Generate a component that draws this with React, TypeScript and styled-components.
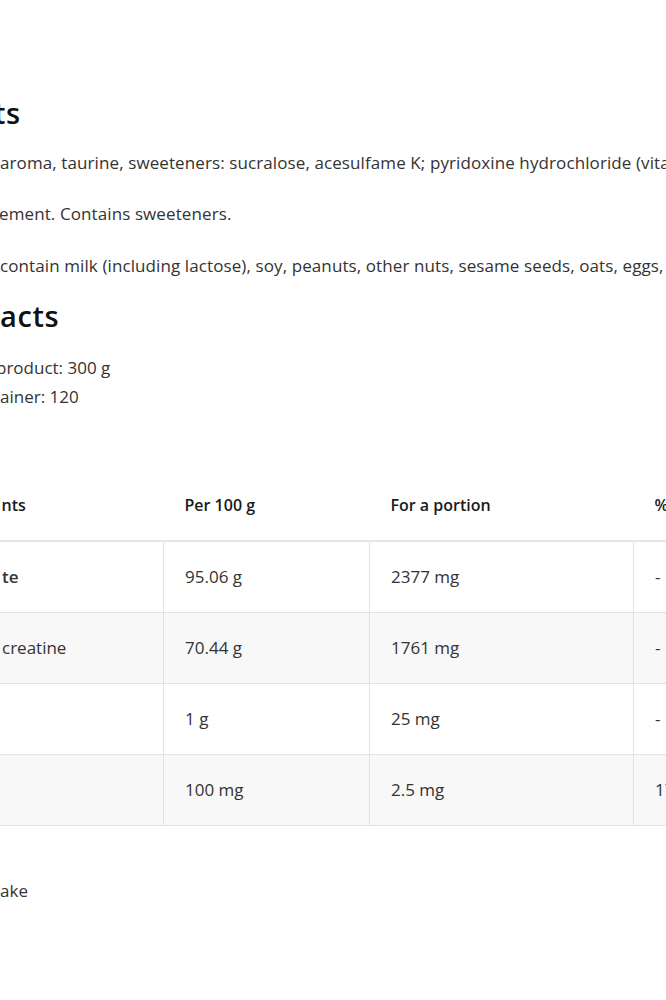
import React from "react";
import styled, { createGlobalStyle } from "styled-components";

const Global = createGlobalStyle`
  html, body { margin: 0; padding: 0; background: #fff; }
  body { overflow: hidden; width: 666px; font-family: "Open Sans", "Noto Sans", sans-serif; }
`;

const Viewport = styled.div`
  width: 666px;
  height: 1000px;
  overflow: hidden;
  position: relative;
`;

const Content = styled.div`
  width: 900px;
  padding-top: 95px;
  display: flex;
  flex-direction: column;
`;

const Heading = styled.h2<{ $shift?: number; $top?: number }>`
  margin: ${(p) => p.$top ?? 0}px 0 0 ${(p) => p.$shift ?? 0}px;
  font-size: 29px;
  line-height: 36px;
  font-weight: 600;
  letter-spacing: 0.6px;
  color: #111;
  white-space: nowrap;
`;

const Para = styled.p<{ $shift?: number; $top?: number }>`
  margin: ${(p) => p.$top ?? 0}px 0 0 ${(p) => p.$shift ?? 0}px;
  font-size: 17px;
  line-height: 26px;
  letter-spacing: 0.1px;
  color: #333;
  white-space: nowrap;
`;

const Line = styled.div<{ $shift?: number; $top?: number }>`
  margin: ${(p) => p.$top ?? 0}px 0 0 ${(p) => p.$shift ?? 0}px;
  font-size: 17px;
  line-height: 29px;
  color: #333;
  white-space: nowrap;
`;

const Table = styled.table`
  margin-top: 59px;
  margin-left: -20px;
  width: 853px;
  table-layout: fixed;
  border-collapse: collapse;
  font-size: 17px;
  color: #333;
`;

const Th = styled.th<{ $w: number }>`
  width: ${(p) => p.$w}px;
  height: 71px;
  padding: 0 0 0 21px;
  text-align: left;
  font-weight: 600;
  font-size: 16px;
  color: #1a1a1a;
  border-bottom: 2px solid #e6e6e6;
  white-space: nowrap;
  box-sizing: border-box;
`;

const Tr = styled.tr<{ $shade?: boolean }>`
  background: ${(p) => (p.$shade ? "#f8f8f8" : "#fff")};
`;

const Td = styled.td<{ $bold?: boolean }>`
  height: 71px;
  padding: 0 0 0 21px;
  border: 1px solid #e2e2e2;
  font-weight: ${(p) => (p.$bold ? 600 : 400)};
  white-space: nowrap;
  box-sizing: border-box;
`;

const Footer = styled.div`
  margin-top: 52px;
  font-size: 17px;
  line-height: 26px;
  color: #333;
  white-space: nowrap;
`;

const rows = [
  { name: "te", bold: true, per: "95.06 g", portion: "2377 mg", pct: "-" },
  { name: "creatine", bold: false, per: "70.44 g", portion: "1761 mg", pct: "-" },
  { name: "", bold: false, per: "1 g", portion: "25 mg", pct: "-" },
  { name: "", bold: false, per: "100 mg", portion: "2.5 mg", pct: "17" },
];

export default function App() {
  return (
    <Viewport>
      <Global />
      <Content>
        <Heading $shift={-6}>ts</Heading>
        <Para $top={19}>
          aroma, taurine, sweeteners: sucralose, acesulfame K; pyridoxine hydrochloride (vitamin B6).
        </Para>
        <Para $top={25} $shift={-1}>ement. Contains sweeteners.</Para>
        <Para $top={26}>
          contain milk (including lactose), soy, peanuts, other nuts, sesame seeds, oats, eggs, fish.
        </Para>
        <Heading $top={19}>acts</Heading>
        <Line $top={19} $shift={-4}>product: 300 g</Line>
        <Line>ainer: 120</Line>
        <Table>
          <thead>
            <tr>
              <Th $w={183}>nts</Th>
              <Th $w={206}>Per 100 g</Th>
              <Th $w={264}>For a portion</Th>
              <Th $w={200}>%</Th>
            </tr>
          </thead>
          <tbody>
            {rows.map((r, i) => (
              <Tr key={i} $shade={i % 2 === 1}>
                <Td $bold={r.bold}>{r.name}</Td>
                <Td>{r.per}</Td>
                <Td>{r.portion}</Td>
                <Td>{r.pct}</Td>
              </Tr>
            ))}
          </tbody>
        </Table>
        <Footer>ake</Footer>
      </Content>
    </Viewport>
  );
}
